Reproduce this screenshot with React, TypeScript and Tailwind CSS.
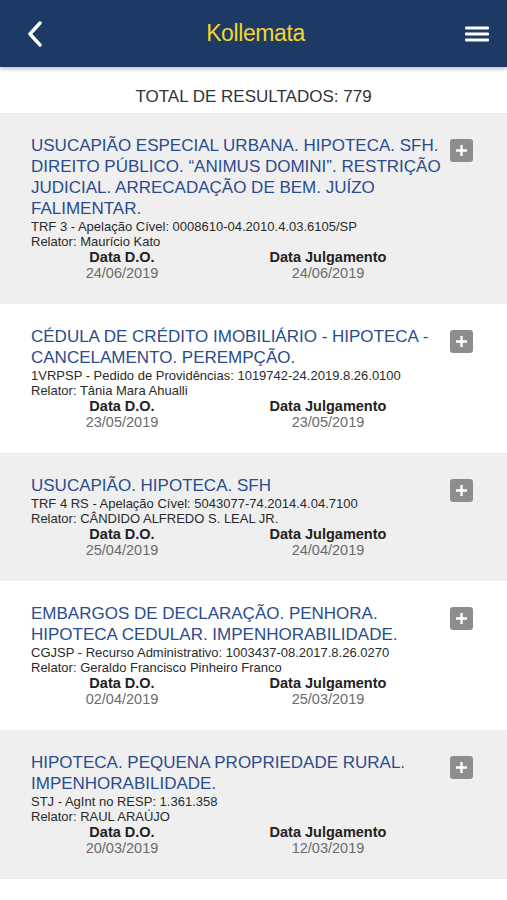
import React from "react";

type Item = {
  title: string[];
  meta: string;
  relator: string;
  dataDO: string;
  dataJul: string;
};

const items: Item[] = [
  {
    title: [
      "USUCAPIÃO ESPECIAL URBANA. HIPOTECA. SFH.",
      "DIREITO PÚBLICO. “ANIMUS DOMINI”. RESTRIÇÃO",
      "JUDICIAL. ARRECADAÇÃO DE BEM. JUÍZO",
      "FALIMENTAR.",
    ],
    meta: "TRF 3 - Apelação Cível: 0008610-04.2010.4.03.6105/SP",
    relator: "Relator: Maurício Kato",
    dataDO: "24/06/2019",
    dataJul: "24/06/2019",
  },
  {
    title: ["CÉDULA DE CRÉDITO IMOBILIÁRIO - HIPOTECA -", "CANCELAMENTO. PEREMPÇÃO."],
    meta: "1VRPSP - Pedido de Providências: 1019742-24.2019.8.26.0100",
    relator: "Relator: Tânia Mara Ahualli",
    dataDO: "23/05/2019",
    dataJul: "23/05/2019",
  },
  {
    title: ["USUCAPIÃO. HIPOTECA. SFH"],
    meta: "TRF 4 RS - Apelação Cível: 5043077-74.2014.4.04.7100",
    relator: "Relator: CÂNDIDO ALFREDO S. LEAL JR.",
    dataDO: "25/04/2019",
    dataJul: "24/04/2019",
  },
  {
    title: ["EMBARGOS DE DECLARAÇÃO. PENHORA.", "HIPOTECA CEDULAR. IMPENHORABILIDADE."],
    meta: "CGJSP - Recurso Administrativo: 1003437-08.2017.8.26.0270",
    relator: "Relator: Geraldo Francisco Pinheiro Franco",
    dataDO: "02/04/2019",
    dataJul: "25/03/2019",
  },
  {
    title: ["HIPOTECA. PEQUENA PROPRIEDADE RURAL.", "IMPENHORABILIDADE."],
    meta: "STJ - AgInt no RESP: 1.361.358",
    relator: "Relator: RAUL ARAÚJO",
    dataDO: "20/03/2019",
    dataJul: "12/03/2019",
  },
];

function PlusButton() {
  return (
    <div className="mt-[4px] flex h-[23px] w-[23px] shrink-0 items-center justify-center rounded-[3px] bg-[#8d8d8d]">
      <svg width="13" height="13" viewBox="0 0 13 13">
        <path d="M6.5 1v11M1 6.5h11" stroke="#ffffff" strokeWidth="2.4" strokeLinecap="butt" />
      </svg>
    </div>
  );
}

function Card({ item, gray }: { item: Item; gray: boolean }) {
  return (
    <div className={gray ? "bg-[#efefef] pl-[31px] pr-[34px] pt-[22px] pb-[23px]" : "bg-white pl-[31px] pr-[34px] pt-[22px] pb-[23px]"}>
      <div className="flex items-start justify-between">
        <div className="min-w-0">
          <div className="text-[17px] leading-[21px] text-[#2b4c8c]">
            {item.title.map((t, i) => (
              <div key={i} className="whitespace-nowrap">
                {t}
              </div>
            ))}
          </div>
          <div className="text-[13px] leading-[15px] text-[#2a2a2a]">
            <div className="whitespace-nowrap">{item.meta}</div>
            <div className="whitespace-nowrap">{item.relator}</div>
          </div>
        </div>
        <PlusButton />
      </div>
      <div className="ml-[-12px] flex">
        <div className="w-[206px] text-center">
          <div className="text-[14.5px] font-bold leading-[17px] text-[#222222]">Data D.O.</div>
          <div className="text-[14.5px] leading-[15px] text-[#6b6b6b]">{item.dataDO}</div>
        </div>
        <div className="w-[206px] text-center">
          <div className="text-[14.5px] font-bold leading-[17px] text-[#222222]">Data Julgamento</div>
          <div className="text-[14.5px] leading-[15px] text-[#6b6b6b]">{item.dataJul}</div>
        </div>
      </div>
    </div>
  );
}

export default function App() {
  return (
    <div className="min-h-[900px] w-[507px] bg-white" style={{ fontFamily: '"Liberation Sans", Arial, sans-serif' }}>
      <div className="relative z-10 flex h-[67px] items-center justify-between bg-[#1c3a64] px-[26px] shadow-[0_2px_4px_rgba(0,0,0,0.25)]">
        <svg width="20" height="26" viewBox="0 0 20 26">
          <path d="M14 2 L4 13 L14 24" fill="none" stroke="#ffffff" strokeWidth="3.4" strokeLinecap="round" strokeLinejoin="round" />
        </svg>
        <div className="text-[23px] font-medium leading-none tracking-[-0.4px] text-[#f3d52a]">Kollemata</div>
        <svg width="24" height="18" viewBox="0 0 24 18" className="mr-[-8px]">
          <rect x="0" y="1.5" width="24" height="3" rx="1" fill="#ffffff" />
          <rect x="0" y="7.5" width="24" height="3" rx="1" fill="#ffffff" />
          <rect x="0" y="13.5" width="24" height="3" rx="1" fill="#ffffff" />
        </svg>
      </div>
      <div className="pt-[19px] pb-[6px] text-center text-[17px] leading-[21px] text-[#333333]">
        TOTAL DE RESULTADOS: 779
      </div>
      <div>
        {items.map((it, i) => (
          <Card key={i} item={it} gray={i % 2 === 0} />
        ))}
      </div>
    </div>
  );
}
